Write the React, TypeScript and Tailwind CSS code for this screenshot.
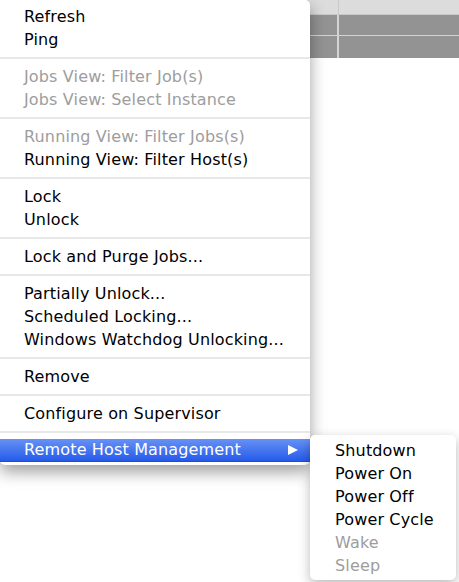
import { Fragment } from "react";

type Item = { label: string; disabled?: boolean };

const GROUPS: Item[][] = [
  [{ label: "Refresh" }, { label: "Ping" }],
  [
    { label: "Jobs View: Filter Job(s)", disabled: true },
    { label: "Jobs View: Select Instance", disabled: true },
  ],
  [
    { label: "Running View: Filter Jobs(s)", disabled: true },
    { label: "Running View: Filter Host(s)" },
  ],
  [{ label: "Lock" }, { label: "Unlock" }],
  [{ label: "Lock and Purge Jobs..." }],
  [
    { label: "Partially Unlock..." },
    { label: "Scheduled Locking..." },
    { label: "Windows Watchdog Unlocking..." },
  ],
  [{ label: "Remove" }],
  [{ label: "Configure on Supervisor" }],
];

const SUBMENU: Item[] = [
  { label: "Shutdown" },
  { label: "Power On" },
  { label: "Power Off" },
  { label: "Power Cycle" },
  { label: "Wake", disabled: true },
  { label: "Sleep", disabled: true },
];

function MenuItem({ item, indent = "pl-6" }: { item: Item; indent?: string }) {
  return (
    <div
      className={`flex h-[23px] items-center ${indent} whitespace-nowrap tracking-[0.15px] ${
        item.disabled ? "text-[#9d9d9d]" : "text-black"
      }`}
    >
      {item.label}
    </div>
  );
}

function Separator() {
  return (
    <div className="flex h-[14px] items-center">
      <div className="h-[2px] w-full bg-[#e8e8e8]" />
    </div>
  );
}

export default function App() {
  return (
    <div className="relative h-[582px] w-[459px] overflow-hidden bg-white font-['DejaVu_Sans',sans-serif] text-[16px]">
      {/* table behind the menu */}
      <div className="flex flex-col">
        <div className="flex h-[15px] border-b border-[#c9c9c9] bg-[#dcdcdc]">
          <div className="w-[339px] border-r border-[#c9c9c9]" />
        </div>
        <div className="flex h-[21px] border-b border-[#d4d4d4] bg-[#939393]">
          <div className="w-[339px] border-r-2 border-[#d4d4d4]" />
        </div>
        <div className="flex h-[22px] bg-[#939393]">
          <div className="w-[339px] border-r-2 border-[#d4d4d4]" />
        </div>
      </div>

      {/* context menu */}
      <div className="absolute top-0 left-0 w-[310px] rounded-b-[5px] rounded-tr-[5px] bg-white pt-[5px] pb-[3px] shadow-[0_7px_16px_rgba(0,0,0,0.38)]">
        {GROUPS.map((group, i) => (
          <Fragment key={i}>
            {group.map((item) => (
              <MenuItem key={item.label} item={item} />
            ))}
            <Separator />
          </Fragment>
        ))}
        <div className="flex h-[23px] items-center justify-between border-b border-[#1b4fd6] bg-gradient-to-b from-[#6791f6] to-[#2559e9] pr-3 pl-6 tracking-[0.15px] text-white">
          <span>Remote Host Management</span>
          <svg width="10" height="10" viewBox="0 0 10 10">
            <path d="M0 0 L10 5 L0 10 Z" fill="white" />
          </svg>
        </div>
      </div>

      {/* submenu */}
      <div className="absolute top-[435px] left-[310px] w-[146px] rounded-[5px] bg-white pt-1 pb-[3px] shadow-[0_4px_12px_rgba(0,0,0,0.28)]">
        {SUBMENU.map((item) => (
          <MenuItem key={item.label} item={item} indent="pl-[25px]" />
        ))}
      </div>
    </div>
  );
}
